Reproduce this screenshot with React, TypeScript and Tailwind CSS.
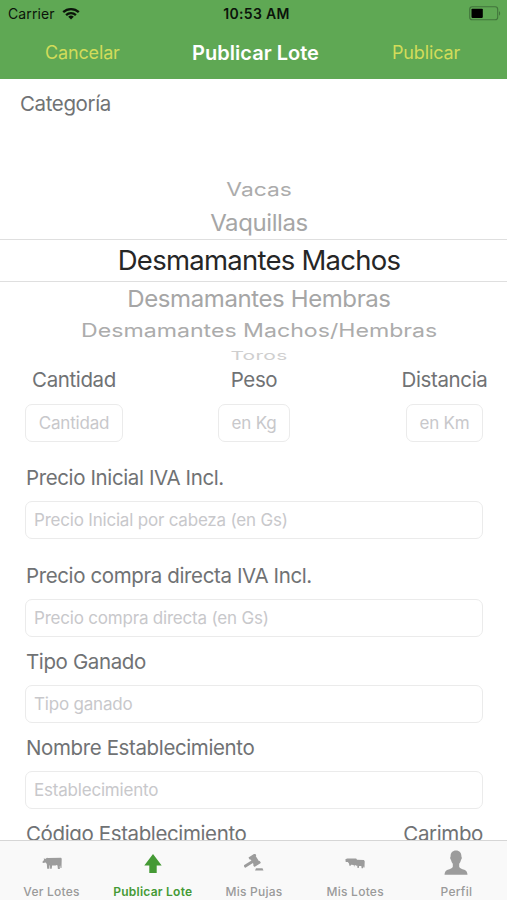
import React from "react";

type IconProps = { className?: string };

const WifiIcon = ({ className }: IconProps) => (
  <svg className={className} width="18" height="13" viewBox="0 0 18 13" fill="none" stroke="#0b140a" strokeWidth="2.3">
    <path d="M1.2 5.2a11.2 11.2 0 0 1 15.6 0" />
    <path d="M4.1 8.1a7 7 0 0 1 9.8 0" />
    <path d="M9 12.6 6.2 9.8a4 4 0 0 1 5.6 0Z" fill="#0b140a" stroke="none" />
  </svg>
);

const BatteryIcon = () => (
  <svg width="32" height="15" viewBox="0 0 32 15">
    <rect x="0.7" y="0.8" width="28" height="13" rx="2.6" fill="none" stroke="#41743b" strokeWidth="1.1" />
    <rect x="2.5" y="2.7" width="11.3" height="9.2" rx="0.8" fill="#000" />
    <path d="M30 5.2c1.5.4 1.5 3.8 0 4.2Z" fill="#41743b" />
  </svg>
);

const CowIcon = () => (
  <svg width="20" height="13" viewBox="0 0 20 13" fill="#9c9c9c">
    <path d="M1.8 1.2 3.2 2 5 .8 6 1.1 19 .8q.7.3.7 1.1L19.500 11h-1l-.3-2.500-.4.4.1 3h-2l-.4-3.500-.9-.4-.9.500-3.600-.1-.4 3.300H8.100L8 8.300l-.5.1-.2 3.300H5.200L4.800 7 3.700 5.500 1 6.100.3 5.100 2 3Z" />
  </svg>
);

const ArrowIcon = () => (
  <svg width="18" height="19" viewBox="0 0 18 19" fill="#459a35">
    <path d="M9 0 17.7 11.5H12.7V19H5.3V11.5H.3Z" />
  </svg>
);

const GavelIcon = () => (
  <svg width="20" height="18" viewBox="0 0 20 18" fill="#9c9c9c">
    <g transform="rotate(-32 10.500 6.500)">
      <rect x="7.7" y="2.7" width="6.2" height="7.4" />
      <rect x="6.900" y="0.7" width="7.8" height="2.6" rx=".6" />
      <rect x="6.900" y="9.3" width="7.8" height="2.6" rx=".6" />
      <rect x="-1.5" y="5" width="9.8" height="2.8" rx=".9" />
    </g>
    <path d="M12 14.200h6.500l1 2.200h-8.500Z" />
  </svg>
);

const HerdIcon = () => (
  <svg width="20" height="11" viewBox="0 0 20 11" fill="#9c9c9c">
    <path d="M.4 1.3 2.2.5 11.2.4l.8 1.300 6.900.3.8 1.200-.2 6.200h-.9l-.2-1.500-.4 2.300h-1.400l-.3-2.200-2.200.1-.3 1.900h-1.300l-.3-2.500-1 .2-.9-.7-.7.2-.2 1.200H9L8.700 6.900 6 6.700 5.700 7.700H4.400L4 5.400 2.800 3.900.7 4Z" />
  </svg>
);

const PersonIcon = () => (
  <svg width="24" height="26" viewBox="0 0 24 26" fill="#9c9c9c">
    <path d="M12 .4c3.500 0 5.400 2.300 5.400 5.600 0 1 .5 1.200.4 2.300-.1 1-.7 1.200-.9 2-.3 1.600-1 2.700-1.700 3.400v3c.3 1.600 2.700 2.200 5.100 3.100 2.100.8 3 2.200 3.200 5H.5c.2-2.800 1.100-4.200 3.200-5 2.400-.9 4.800-1.500 5.100-3.100v-3c-.7-.7-1.400-1.800-1.700-3.400-.2-.8-.8-1-.9-2-.1-1.100.4-1.300.4-2.300C6.600 2.700 8.500.4 12 .4Z" />
  </svg>
);

const PICKER = [
  { text: "Vacas", box: "h-[34px]", font: "text-[23px] tracking-[0px] text-[#acacac]", shape: "scale-x-[0.99] scale-y-[0.8]" },
  { text: "Vaquillas", box: "h-[33px]", font: "text-[24px] tracking-[-0.4px] text-[#a6a6a6]", shape: "scale-y-[0.98]" },
  { text: "Desmamantes Machos", box: "h-[43px] border-y border-[#dfdfdf]", font: "text-[27.5px] tracking-[-0.75px] text-[#262626]", shape: "" },
  { text: "Desmamantes Hembras", box: "h-[33px]", font: "text-[24px] tracking-[-0.4px] text-[#a6a6a6]", shape: "scale-y-[0.98]" },
  { text: "Desmamantes Machos/Hembras", box: "h-[33px]", font: "text-[23px] tracking-[0px] text-[#acacac]", shape: "scale-x-[1.005] scale-y-[0.8]" },
  { text: "Toros", box: "h-[15px]", font: "text-[21px] tracking-[0.3px] text-[#cfcfcf]", shape: "scale-y-[0.55]" },
];

const Label = ({ children, className = "" }: { children: React.ReactNode; className?: string }) => (
  <div className={`h-7 whitespace-nowrap text-[20.5px] leading-7 tracking-[-0.38px] text-[#707274] ${className}`}>{children}</div>
);

const Field = ({ hint, className = "" }: { hint: string; className?: string }) => (
  <div className={`flex h-[38px] items-center whitespace-nowrap rounded-[7px] border border-[#ebebeb] px-2 pt-px text-[17px] tracking-[-0.2px] text-[#c8c8cb] ${className}`}>
    {hint}
  </div>
);

const TABS = [
  { label: "Ver Lotes", icon: <CowIcon /> },
  { label: "Publicar Lote", icon: <ArrowIcon />, active: true },
  { label: "Mis Pujas", icon: <GavelIcon /> },
  { label: "Mis Lotes", icon: <HerdIcon /> },
  { label: "Perfil", icon: <PersonIcon /> },
];

export default function App() {
  return (
    <div className="flex h-[900px] w-[507px] flex-col overflow-hidden bg-white font-['Inter',sans-serif]">
      <header className="h-[79px] shrink-0 bg-[#5fa854]">
        <div className="grid h-[27px] grid-cols-3 items-center pl-2 pr-1.5 text-[14px] text-[#0b140a]">
          <div className="flex items-center gap-[7px]">
            <span className="tracking-[0.1px]">Carrier</span>
            <WifiIcon />
          </div>
          <span className="pl-1 text-center font-semibold tracking-[0.3px]">10:53 AM</span>
          <div className="flex justify-end"><BatteryIcon /></div>
        </div>
        <div className="flex h-[51px] items-center justify-between pl-[45px] pr-[47px] text-[18px] tracking-[-0.15px] text-[#d2dc5a]">
          <span className="w-[74px]">Cancelar</span>
          <span className="text-[20px] font-semibold tracking-[0.02px] text-white">Publicar Lote</span>
          <span className="w-[68px]">Publicar</span>
        </div>
      </header>

      <main className="min-h-0 flex-1 overflow-hidden">
        <Label className="mt-[11px] pl-[20px]">Categoría</Label>
        <div className="mt-[54px] flex h-[194px] flex-col overflow-hidden">
          {PICKER.map((row) => (
            <div key={row.text} className={`flex shrink-0 items-center justify-center pl-[11px] ${row.box}`}>
              <span className={`whitespace-nowrap leading-none ${row.font} ${row.shape}`}>{row.text}</span>
            </div>
          ))}
        </div>

        <div className="flex pl-[25px] pr-6">
          <div className="flex w-[98px] flex-col items-center gap-[10px]">
            <Label>Cantidad</Label>
            <Field hint="Cantidad" className="w-full justify-center" />
          </div>
          <div className="ml-[95px] flex w-[72px] flex-col items-center gap-[10px]">
            <Label>Peso</Label>
            <Field hint="en Kg" className="w-full justify-center" />
          </div>
          <div className="ml-[116px] flex w-[77px] flex-col items-center gap-[10px]">
            <Label>Distancia</Label>
            <Field hint="en Km" className="w-full justify-center" />
          </div>
        </div>

        <div className="pl-[25px] pr-6">
          <Label className="mt-[22px] pl-px">Precio Inicial IVA Incl.</Label>
          <Field hint="Precio Inicial por cabeza (en Gs)" className="mt-[9px]" />
          <Label className="mt-[23px] pl-px">Precio compra directa IVA Incl.</Label>
          <Field hint="Precio compra directa (en Gs)" className="mt-[9px]" />
          <Label className="mt-[11px] pl-px">Tipo Ganado</Label>
          <Field hint="Tipo ganado" className="mt-[9px]" />
          <Label className="mt-[11px] pl-px">Nombre Establecimiento</Label>
          <Field hint="Establecimiento" className="mt-[9px]" />
          <div className="mt-[11px] flex justify-between pl-px">
            <Label>Código Establecimiento</Label>
            <Label>Carimbo</Label>
          </div>
        </div>
      </main>

      <nav className="grid h-[60px] shrink-0 grid-cols-5 border-t border-[#d6d6d6] bg-[#f9f9f9] pl-px">
        {TABS.map((tab) => (
          <div key={tab.label} className="flex flex-col items-center">
            <div className="flex h-11 items-center">{tab.icon}</div>
            <span
              className={`whitespace-nowrap text-[12px] leading-[13px] tracking-[0.25px] ${tab.active ? "font-semibold text-[#459a35]" : "font-medium text-[#9a9a9a]"}`}
            >
              {tab.label}
            </span>
          </div>
        ))}
      </nav>
    </div>
  );
}
